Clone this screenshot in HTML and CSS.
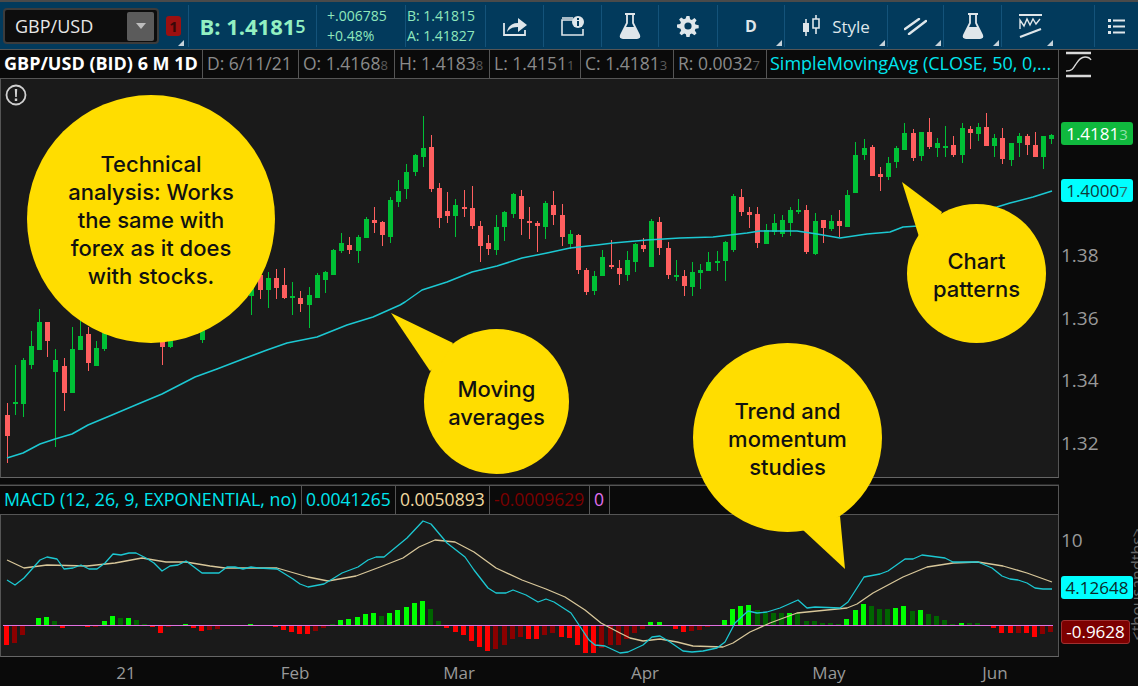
FILE: index.html
```html
<!DOCTYPE html>
<html lang="en">
<head>
<meta charset="UTF-8">
<meta name="viewport" content="width=device-width, initial-scale=1.0">
<title>GBP/USD chart</title>
<link rel="stylesheet" href="styles.css">
</head>
<body>

<div class="toolbar">
    <div class="cell cell-symbol">
        <div class="symbol-box">
            <span class="symbol-name">GBP/USD</span>
            <span class="symbol-drop"><i class="drop-arrow"></i></span>
        </div>
        <span class="alert-badge">1</span>
        <i class="corner"></i>
    </div>
    <div class="cell cell-price">B: 1.4181<small>5</small></div>
    <div class="cell cell-stack cell-change"><span>+.006785</span><span>+0.48%</span></div>
    <div class="cell cell-stack cell-quote"><span>B: 1.41815</span><span>A: 1.41827</span></div>
    <div class="cell cell-share">
        <svg class="icon" width="24" height="20" viewBox="0 0 24 20"><path d="M1 7v12h21v-5" fill="none" stroke="#dfe6ea" stroke-width="1.8"/><path d="M4 16c1-6 5-9 11-9V2l9 7-9 7v-5c-5 0-8 1-11 5z" fill="#dfe6ea"/></svg>
    </div>
    <div class="cell cell-info">
        <svg class="icon" width="24" height="20" viewBox="0 0 24 20"><path d="M13 4H1v15h21v-6M1 2h11" fill="none" stroke="#dfe6ea" stroke-width="1.6"/><circle cx="17" cy="6" r="6" fill="#dfe6ea"/><path d="M16 5h2v5h-2zM16 2h2v2h-2z" fill="#023a5c"/></svg>
    </div>
    <div class="cell cell-flask">
        <svg class="icon" width="22" height="26" viewBox="0 0 22 26"><use href="#flask"/></svg>
    </div>
    <div class="cell cell-gear">
        <svg class="icon" width="22" height="22" viewBox="0 0 22 22"><path d="M9.500 1h3l.6 3.200 1.700.7 2.700-1.800 2.100 2.100-1.800 2.700.7 1.700 3.200.6v3l-3.200.6-.7 1.700 1.800 2.700-2.100 2.100-2.700-1.800-1.700.7-.6 3.200h-3l-.6-3.200-1.700-.7-2.700 1.800-2.100-2.100 1.800-2.700-.7-1.700L0 12.500v-3l3.200-.6.700-1.700-1.800-2.700 2.100-2.100 2.700 1.800 1.700-.7z" fill="#dfe6ea"/><circle cx="11" cy="11" r="3.600" fill="#023a5c"/></svg>
    </div>
    <div class="cell cell-period">D<i class="corner"></i></div>
    <div class="cell cell-style">
        <svg class="icon" width="18" height="22" viewBox="0 0 18 22"><path d="M4 4v17" stroke="#dfe6ea" stroke-width="1.600"/><path d="M1 8h6v9H1z" fill="#dfe6ea"/><path d="M14 0v19" stroke="#dfe6ea" stroke-width="1.600"/><path d="M11 4h6v9h-6z" fill="#023a5c" stroke="#dfe6ea" stroke-width="1.600"/></svg>
        <span class="style-label">Style</span>
        <i class="corner"></i>
    </div>
    <div class="cell cell-lines">
        <svg class="icon" width="23" height="17" viewBox="0 0 23 17"><path d="M1 11 15 1M5 16 22 3" fill="none" stroke="#dfe6ea" stroke-width="2.400" stroke-linecap="round"/></svg>
        <i class="corner"></i>
    </div>
    <div class="cell cell-flask2">
        <svg class="icon" width="22" height="26" viewBox="0 0 22 26"><use href="#flask"/></svg>
        <i class="corner"></i>
    </div>
    <div class="cell cell-pattern">
        <svg class="icon" width="23" height="24" viewBox="0 0 23 24"><path d="M0 1h23" stroke="#dfe6ea" stroke-width="2"/><path d="M1 15V6l4 6 3-7 3 6 3-6 3 5 4-5" fill="none" stroke="#dfe6ea" stroke-width="1.400"/><path d="M1 23l21-8" stroke="#dfe6ea" stroke-width="2.200"/></svg>
        <i class="corner"></i>
    </div>
    <div class="cell cell-list">
        <svg class="icon" width="17" height="15" viewBox="0 0 17 15"><path d="M0 0h3v3H0zM0 6h3v3H0zM0 12h3v3H0z" fill="#dfe6ea"/><path d="M5 1.500h12M5 7.500h12M5 13.500h12" stroke="#dfe6ea" stroke-width="2"/></svg>
    </div>
</div>

<svg class="defs" width="0" height="0">
    <symbol id="flask" viewBox="0 0 22 26"><path d="M6 1h10M8 2v8L2 22c-1 2 0 3 2 3h14c2 0 3-1 2-3L14 10V2" fill="none" stroke="#dfe6ea" stroke-width="1.800"/><path d="M6 14h10l5 10-1 1H2l-1-1z" fill="#dfe6ea"/></symbol>
</svg>

<div class="workspace">
    <div class="charts">
        <div class="legend">
            <span class="legend-item legend-title">GBP/USD (BID) 6 M 1D</span>
            <span class="legend-item legend-date">D: 6/11/21</span>
            <span class="legend-item legend-open">O: 1.4168<small>8</small></span>
            <span class="legend-item legend-high">H: 1.4183<small>8</small></span>
            <span class="legend-item legend-low">L: 1.4151<small>1</small></span>
            <span class="legend-item legend-close">C: 1.4181<small>3</small></span>
            <span class="legend-item legend-range">R: 0.0032<small>7</small></span>
            <span class="legend-item legend-sma">SimpleMovingAvg (CLOSE, 50, 0,...</span>
        </div>
        <div class="plot plot-price">
            <svg id="priceChart" class="plot-svg" viewBox="0 79 1058 399" width="1058" height="399"></svg>
            <svg class="notice" width="22" height="22" viewBox="0 0 22 22"><circle cx="11" cy="11" r="9.500" fill="none" stroke="#d0d0d0" stroke-width="1.800"/><path d="M9.800 5h2.400l-.4 8h-1.600zM9.800 14.500h2.400v2.400H9.800z" fill="#d0d0d0"/></svg>
        </div>
        <div class="splitter"></div>
        <div class="legend legend-macd">
            <span class="legend-item macd-title">MACD (12, 26, 9, EXPONENTIAL, no)</span>
            <span class="legend-item macd-value">0.0041265</span>
            <span class="legend-item macd-avg">0.0050893</span>
            <span class="legend-item macd-diff">-0.0009629</span>
            <span class="legend-item macd-zero">0</span>
        </div>
        <div class="plot plot-macd">
            <svg id="macdChart" class="plot-svg" viewBox="0 515 1058 142" width="1058" height="142"></svg>
        </div>
        <div class="time-axis">
            <span style="left:126px">21</span>
            <span style="left:295px">Feb</span>
            <span style="left:459px">Mar</span>
            <span style="left:645px">Apr</span>
            <span style="left:829px">May</span>
            <span style="left:995px">Jun</span>
        </div>
    </div>

    <div class="price-axis">
        <svg class="axis-toggle" width="27" height="27" viewBox="0 0 27 27"><path d="M1 2h25M1 25h25" stroke="#d8d8d8" stroke-width="2.400"/><path d="M1 20c6 0 7-2 10-7s5-7 9-7c3 0 5 1 6 3" fill="none" stroke="#d8d8d8" stroke-width="1.400"/></svg>
        <span class="axis-label" style="top:193px">1.38</span>
        <span class="axis-label" style="top:256px">1.36</span>
        <span class="axis-label" style="top:318px">1.34</span>
        <span class="axis-label" style="top:381px">1.32</span>
        <span class="axis-label" style="top:478px">10</span>
        <span class="tag tag-last" style="top:72px">1.4181<small>3</small></span>
        <span class="tag tag-sma" style="top:129px">1.4000<small>7</small></span>
        <span class="tag tag-macd" style="top:526px">4.12648</span>
        <span class="tag tag-diff" style="top:570px">-0.9628</span>
        <span class="axis-unit">&lt;thousandths&gt;</span>
    </div>
</div>

<div class="bubble bubble-analysis">Technical<br>analysis: Works<br>the same with<br>forex as it does<br>with stocks.</div>
<div class="bubble bubble-average"><i class="tail"></i><span>Moving<br>averages</span></div>
<div class="bubble bubble-pattern"><i class="tail"></i><span>Chart<br>patterns</span></div>
<div class="bubble bubble-trend"><i class="tail"></i><span>Trend and<br>momentum<br>studies</span></div>

<script src="chart.js"></script>
</body>
</html>
```

FILE: styles.css
```css
* {
    box-sizing: border-box;
}
body {
    margin: 0;
    width: 1138px;
    height: 686px;
    overflow: hidden;
    position: relative;
    background-color: #0a0a0a;
    color: #999;
    font-family: "Open Sans", "Noto Sans", sans-serif;
}
small {
    font-size: 13px;
}

/* toolbar */
.toolbar {
    display: flex;
    height: 50px;
    border-top: 2px solid #4a4a4a;
    border-bottom: 1px solid #555;
    background-color: #023a5c;
    color: #dfe6ea;
}
.cell {
    position: relative;
    display: flex;
    flex: none;
    align-items: center;
    justify-content: center;
    margin: 3px 0 2px;
    border-right: 1px solid #14537a;
}
.corner {
    position: absolute;
    right: 2px;
    bottom: 1px;
    width: 0;
    height: 0;
    border-left: 6px solid transparent;
    border-bottom: 6px solid #c6d2da;
}
.cell-symbol { width: 189px; justify-content: flex-start; padding-left: 3px; }
.cell-symbol .corner { right: 4px; }
.cell-price { width: 128px; font-size: 22px; font-weight: 700; color: #93f0c2; }
.cell-price small { font-size: 18px; font-weight: 600; }
.cell-change { width: 89px; padding-left: 10px; }
.cell-quote { width: 80px; padding-left: 1px; }
.cell-share { width: 58px; }
.cell-info { width: 58px; }
.cell-flask { width: 57px; }
.cell-gear { width: 59px; }
.cell-period { width: 67px; font-size: 16px; font-weight: 700; }
.cell-style { width: 103px; gap: 12px; font-size: 17px; }
.cell-lines { width: 56px; }
.cell-flask2 { width: 58px; }
.cell-pattern { width: 93px; justify-content: flex-start; padding-left: 17px; }
.cell-pattern .corner { right: 41px; }
.cell-list { flex: 1; border-right: 0; }
.cell-stack {
    flex-direction: column;
    align-items: flex-start;
    gap: 2px;
    font-size: 14px;
    line-height: 18px;
    color: #8fe8bc;
}
.symbol-box {
    display: flex;
    align-items: center;
    justify-content: space-between;
    width: 156px;
    height: 36px;
    padding: 0 3px 0 10px;
    border: 2px solid #3c3c3c;
    border-radius: 4px;
    background-color: #0d0d0d;
    font-size: 18px;
    color: #e8e8e8;
}
.symbol-drop {
    display: flex;
    align-items: center;
    justify-content: center;
    width: 27px;
    height: 29px;
    border-radius: 2px;
    background-color: #5b5b5b;
}
.drop-arrow {
    width: 0;
    height: 0;
    border: 5px solid transparent;
    border-top: 6px solid #bdbdbd;
    border-bottom: 0;
}
.alert-badge {
    width: 15px;
    height: 20px;
    margin-left: 7px;
    border-radius: 3px;
    background-color: #9c1010;
    color: #3a0808;
    font-size: 15px;
    font-weight: 700;
    line-height: 20px;
    text-align: center;
}
.defs {
    position: absolute;
}

/* chart columns */
.workspace {
    display: flex;
    height: 636px;
}
.charts {
    display: flex;
    flex-direction: column;
    width: 1059px;
    flex: none;
}
.legend {
    display: flex;
    flex: none;
    height: 29px;
    border-bottom: 1px solid #555;
    border-right: 1px solid #555;
    background-color: #0a0a0a;
    font-size: 17.5px;
    line-height: 27px;
    white-space: nowrap;
}
.legend-item {
    flex: none;
    padding-left: 4px;
    border-right: 1px solid #555;
    color: #8a8a8a;
}
.legend-item small {
    color: #5a5a5a;
}
.legend-title { width: 203px; color: #fff; font-size: 18px; font-weight: 700; }
.legend-date { width: 96px; }
.legend-open { width: 96px; }
.legend-high { width: 95px; }
.legend-low { width: 91px; }
.legend-close { width: 93px; }
.legend-range { width: 93px; }
.legend-sma { flex: 1; border-right: 0; padding-left: 3px; color: #00e5ee; font-size: 18px; }
.legend-macd {
    border-top: 1px solid #555;
    height: 30px;
    line-height: 27px;
}
.macd-title { width: 302px; color: #00e5ee; font-size: 17.8px; }
.macd-value { width: 94px; color: #00e5ee; }
.macd-avg { width: 94px; color: #f0d9a0; }
.macd-diff { width: 100px; color: #7a0000; }
.macd-zero { width: 20px; color: #e070f0; }
.plot {
    position: relative;
    flex: none;
    background-color: #1a1a1a;
    border-left: 1px solid #555;
    border-right: 1px solid #555;
}
.plot-price {
    height: 399px;
    border-bottom: 1px solid #666;
}
.plot-macd {
    height: 142px;
    border-bottom: 1px solid #666;
}
.plot-svg {
    display: block;
    margin-left: -1px;
}
.notice {
    position: absolute;
    left: 4px;
    top: 5px;
}
.splitter {
    flex: none;
    height: 7px;
    border-bottom: 1px solid #2a2a2a;
    background-color: #0a0a0a;
}
.time-axis {
    position: relative;
    flex: 1;
    font-size: 17px;
}
.time-axis span {
    position: absolute;
    top: 4px;
    transform: translateX(-50%);
}

/* price scale */
.price-axis {
    position: relative;
    flex: 1;
    overflow: hidden;
}
.axis-toggle {
    position: absolute;
    left: 6px;
    top: 1px;
}
.axis-label {
    position: absolute;
    left: 2px;
    font-size: 19px;
    line-height: 24px;
}
.tag {
    position: absolute;
    left: 2px;
    width: 72px;
    height: 23px;
    border-radius: 3px;
    font-size: 17px;
    line-height: 23px;
    text-align: center;
}
.tag-last { background-color: #10b93e; color: #fff; }
.tag-last small { color: #8fe0a8; font-size: 15px; }
.tag-sma { background-color: #00ffff; color: #0d3b3b; }
.tag-sma small { color: #2a6a6a; font-size: 15px; }
.tag-macd { background-color: #00ffff; color: #0a2a2a; }
.tag-diff { width: 69px; height: 24px; background-color: #7d0000; border: 1px solid #a03030; color: #fff; line-height: 22px; }
.axis-unit {
    position: absolute;
    left: 70px;
    top: 478px;
    color: #666;
    font-size: 16px;
    line-height: 16px;
    writing-mode: vertical-rl;
    transform: rotate(180deg);
}

/* yellow callouts */
.bubble {
    position: absolute;
    display: flex;
    align-items: center;
    justify-content: center;
    padding-top: 2px;
    border-radius: 50%;
    background-color: #ffdd00;
    color: #111;
    font-family: "Inter", sans-serif;
    font-size: 22px;
    font-weight: 500;
    line-height: 28px;
    text-align: center;
}
.bubble span {
    position: relative;
}
.tail {
    position: absolute;
    background-color: #ffdd00;
}
.bubble-analysis { left: 27px; top: 95px; width: 248px; height: 248px; }
.bubble-average { left: 424px; top: 329px; width: 145px; height: 145px; }
.bubble-average .tail {
    left: -33px;
    top: -16px;
    width: 70px;
    height: 70px;
    clip-path: polygon(0 0, 62px 30px, 50px 50px, 39px 58px);
}
.bubble-pattern { left: 907px; top: 204px; width: 139px; height: 139px; }
.bubble-pattern .tail {
    left: -5px;
    top: -22px;
    width: 50px;
    height: 65px;
    clip-path: polygon(0 0, 40px 30px, 30px 50px, 18px 58px);
}
.bubble-trend { left: 693px; top: 343px; width: 189px; height: 189px; }
.bubble-trend .tail {
    left: 110px;
    top: 170px;
    width: 50px;
    height: 60px;
    clip-path: polygon(0 17px, 37px 3px, 42px 56px);
}
```

FILE: chart.js
```js
// x, colour, wick top, body top, body bottom, wick bottom (page pixels)
var candles = [
    [7,'r',403,415,436,463],[15,'g',365,402,404,415],[23,'g',358,360,404,417],[31,'g',331,346,365,369],
    [39,'g',309,322,350,350],[47,'r',322,322,341,357],[55,'g',349,360,372,447],[64,'r',358,366,393,411],
    [72,'g',327,349,393,393],[80,'g',320,336,350,350],[88,'r',327,334,363,371],[96,'g',341,348,366,366],
    [104,'g',320,333,349,351],[162,'r',320,330,347,365],[170,'g',320,330,347,348],[202,'g',320,330,340,343],
    [251,'g',270,285,296,315],[260,'r',275,275,290,299],[268,'g',272,278,290,308],[276,'r',269,278,288,299],
    [284,'r',268,285,298,299],[292,'g',282,296,298,315],[300,'r',291,298,304,312],[309,'g',287,295,305,328],
    [317,'g',273,275,298,298],[325,'g',271,272,280,293],[333,'g',249,250,275,275],[341,'g',233,243,251,253],
    [349,'r',237,245,250,254],[358,'g',235,237,251,263],[366,'g',217,219,238,238],[374,'r',207,220,223,233],
    [382,'r',221,222,235,246],[390,'g',197,200,237,243],[398,'g',180,191,202,207],[406,'g',164,172,189,199],
    [415,'g',154,155,172,176],[423,'g',116,148,157,167],[431,'r',135,147,189,192],[439,'r',183,188,218,228],
    [447,'r',192,211,216,223],[455,'g',199,205,216,237],[464,'r',190,207,209,217],[472,'r',186,208,226,229],
    [480,'r',221,226,246,262],[488,'r',235,243,249,255],[496,'g',215,227,250,255],[504,'g',211,212,227,241],
    [513,'g',193,194,214,218],[521,'r',190,196,219,235],[529,'r',207,221,223,239],[537,'r',221,223,226,252],
    [545,'g',201,203,227,239],[553,'r',191,205,215,225],[562,'r',204,215,237,246],[570,'g',230,234,244,249],
    [578,'r',234,235,270,274],[586,'r',268,270,292,295],[594,'g',271,276,291,295],[602,'g',250,257,276,276],
    [611,'r',240,265,267,269],[619,'r',260,268,274,285],[627,'g',251,260,275,281],[635,'g',243,244,262,272],
    [643,'r',238,245,249,252],[651,'g',219,221,267,267],[659,'r',217,222,248,255],[668,'r',242,248,275,279],
    [676,'g',260,275,277,281],[684,'r',270,276,286,296],[692,'g',262,272,287,296],[700,'g',264,270,273,289],
    [708,'g',252,262,271,271],[717,'g',251,261,262,271],[725,'g',241,242,261,281],[733,'g',194,196,250,252],
    [741,'r',189,197,212,216],[749,'r',207,212,215,228],[757,'r',207,214,243,248],[766,'g',224,230,244,244],
    [774,'g',214,223,232,235],[782,'g',215,220,234,237],[790,'g',207,210,223,236],[798,'g',199,210,212,214],
    [806,'r',205,210,252,254],[815,'g',213,221,254,255],[823,'r',220,220,228,243],[831,'g',215,221,229,231],
    [839,'r',210,221,226,237],[847,'g',190,195,227,227],[855,'g',142,155,193,193],[864,'g',139,148,155,160],
    [872,'r',145,147,176,176],[880,'r',167,174,177,191],[888,'g',157,163,177,180],[896,'g',146,148,162,168],
    [904,'g',123,133,150,150],[913,'r',129,133,158,161],[921,'g',132,132,156,161],[929,'r',118,132,147,149],
    [937,'g',138,143,148,157],[945,'g',126,146,148,157],[953,'r',136,145,155,157],[962,'g',123,128,155,163],
    [970,'r',126,129,133,149],[978,'g',123,127,134,141],[986,'r',113,127,146,146],[994,'g',134,138,146,157],
    [1002,'r',128,138,159,164],[1011,'g',143,143,160,166],[1019,'g',133,136,143,157],[1027,'r',134,136,145,155],
    [1035,'r',132,145,157,157],[1043,'g',136,136,157,169],[1051,'g',134,135,139,144]
];

var smaLine = [
    [7,458],[23,453],[40,444],[55,439],[72,434],[88,425],[112,415],[138,404],[162,394],[195,377],[217,369],
    [243,359],[267,350],[287,343],[317,337],[347,325],[373,317],[400,305],[405,302],[422,290],[447,282],
    [472,272],[497,266],[522,258],[547,253],[570,248],[597,245],[613,243],[647,240],[680,238],[713,237],
    [747,233],[760,231],[797,231],[817,234],[840,238],[867,234],[890,232],[903,227],[918,226],[960,215],
    [997,207],[1010,203],[1033,197],[1052,191]
];

var signalLine = [
    [7,560],[24,568],[47,565],[87,566],[115,563],[142,558],[166,562],[186,562],[210,566],[225,568],[277,568],
    [308,577],[328,581],[356,576],[380,567],[403,558],[419,547],[435,540],[455,542],[474,552],[496,568],
    [522,580],[546,589],[565,597],[585,610],[601,623],[620,633],[630,638],[643,641],[660,639],[677,642],
    [693,646],[723,647],[733,643],[750,632],[770,623],[797,613],[847,608],[857,604],[873,593],[903,577],
    [927,567],[953,563],[978,562],[1003,566],[1027,573],[1052,582]
];

var macdLine = [
    [7,580],[15,585],[24,578],[40,560],[47,557],[57,559],[64,569],[73,568],[81,565],[89,569],[97,569],[105,563],
    [113,554],[121,555],[129,553],[136,553],[146,558],[154,563],[162,571],[170,566],[178,565],[186,561],[194,567],
    [202,573],[212,573],[219,573],[227,567],[235,567],[243,569],[251,567],[259,568],[277,569],[293,579],[300,584],
    [308,587],[324,584],[334,578],[342,573],[358,567],[368,560],[376,557],[384,557],[407,538],[423,521],[431,524],
    [447,543],[465,557],[474,570],[488,588],[496,593],[506,593],[513,590],[526,595],[538,602],[546,599],[554,602],
    [571,613],[579,625],[589,640],[595,645],[605,646],[620,653],[628,652],[643,645],[652,637],[660,636],[670,642],
    [683,651],[692,652],[703,651],[717,648],[725,642],[735,623],[748,611],[757,613],[767,612],[780,608],[798,600],
    [807,608],[815,607],[840,608],[848,602],[864,577],[880,574],[888,571],[905,559],[913,559],[922,555],[945,558],
    [953,562],[978,562],[992,568],[1002,576],[1010,579],[1018,580],[1027,583],[1035,588],[1043,589],[1052,589]
];

// x, colour key, height above (+) or below (-) the zero line
var histogram = [
    [6,'r',-20],[14,'d',-18],[22,'d',-10],[30,'d',-1],[38,'g',7],[46,'g',8],[54,'e',4],[62,'r',-3],[71,'d',-1],
    [87,'r',-2],[95,'d',-2],[104,'g',4],[112,'g',9],[120,'e',7],[128,'g',7],[136,'e',5],[144,'e',1],[152,'r',-2],
    [160,'r',-8],[168,'d',-2],[177,'d',-1],[185,'g',1],[193,'r',-3],[201,'r',-6],[209,'d',-5],[217,'d',-4],
    [241,'r',-1],[250,'g',1],[259,'r',-1],[275,'r',-2],[283,'r',-5],[291,'r',-7],[299,'r',-9],[307,'r',-9],
    [315,'d',-6],[323,'d',-3],[332,'e',1],[340,'g',5],[348,'g',6],[357,'g',8],[365,'g',11],[373,'g',12],[381,'e',9],
    [389,'g',12],[397,'g',15],[406,'g',18],[414,'g',22],[422,'g',24],[430,'e',16],[438,'e',4],[446,'r',-3],[455,'r',-7],
    [463,'r',-10],[471,'r',-16],[479,'r',-22],[487,'r',-26],[495,'d',-24],[504,'d',-20],[512,'d',-14],[520,'d',-12],
    [528,'r',-14],[536,'r',-14],[544,'d',-10],[552,'d',-8],[561,'r',-12],[569,'r',-13],[577,'r',-20],[585,'r',-28],
    [593,'r',-28],[601,'d',-23],[610,'d',-20],[618,'d',-20],[626,'d',-14],[634,'d',-8],[642,'d',-4],[650,'g',3],
    [659,'g',3],[667,'r',-1],[675,'r',-4],[683,'r',-7],[691,'d',-6],[699,'d',-5],[707,'d',-2],[724,'g',5],[732,'g',16],
    [740,'g',19],[748,'g',20],[757,'e',15],[765,'e',12],[773,'e',12],[781,'e',12],[789,'g',12],[797,'e',12],[806,'e',4],
    [814,'e',4],[822,'e',2],[830,'e',2],[838,'e',1],[846,'g',6],[855,'g',15],[863,'g',21],[871,'e',19],[879,'e',16],
    [887,'e',16],[895,'g',17],[903,'g',19],[912,'e',14],[920,'g',15],[928,'e',11],[936,'e',9],[944,'e',5],[952,'e',1],
    [961,'g',2],[969,'e',2],[977,'e',2],[985,'r',-1],[993,'r',-3],[1001,'r',-8],[1010,'r',-8],[1018,'d',-8],
    [1026,'r',-8],[1034,'r',-12],[1042,'d',-9],[1050,'d',-7]
];

var candleColors = { r: '#ff5f5f', g: '#00c036' };
var barColors = { r: '#ff0000', d: '#8b0000', g: '#00ff00', e: '#006400' };
var zeroY = 625;

function rect(x, y, w, h, fill) {
    return '<rect x="' + x + '" y="' + y + '" width="' + w + '" height="' + h + '" fill="' + fill + '" shape-rendering="crispEdges"/>';
}

function polyline(points, color, width) {
    return '<polyline fill="none" stroke="' + color + '" stroke-width="' + width + '" stroke-linejoin="round" points="' + points.join(' ') + '"/>';
}

// Price panel
var priceSvg = '';
candles.forEach(function(c) {
    var color = candleColors[c[1]];
    priceSvg += rect(c[0], c[2], 1, c[5] - c[2], color);
    priceSvg += rect(c[0] - 2, c[3], 5, Math.max(c[4] - c[3], 2), color);
});
priceSvg += polyline(smaLine, '#1cc8d2', 1.5);
document.getElementById('priceChart').innerHTML = priceSvg;

// MACD panel
var macdSvg = '';
histogram.forEach(function(b) {
    var top = b[2] > 0 ? zeroY - b[2] : zeroY;
    macdSvg += rect(b[0] - 2, top, 5, Math.abs(b[2]), barColors[b[1]]);
});
macdSvg += rect(3, zeroY, 1050, 1, '#e070e0');
macdSvg += polyline(signalLine, '#d8c79a', 1.3);
macdSvg += polyline(macdLine, '#1cc8d2', 1.3);
document.getElementById('macdChart').innerHTML = macdSvg;
```
